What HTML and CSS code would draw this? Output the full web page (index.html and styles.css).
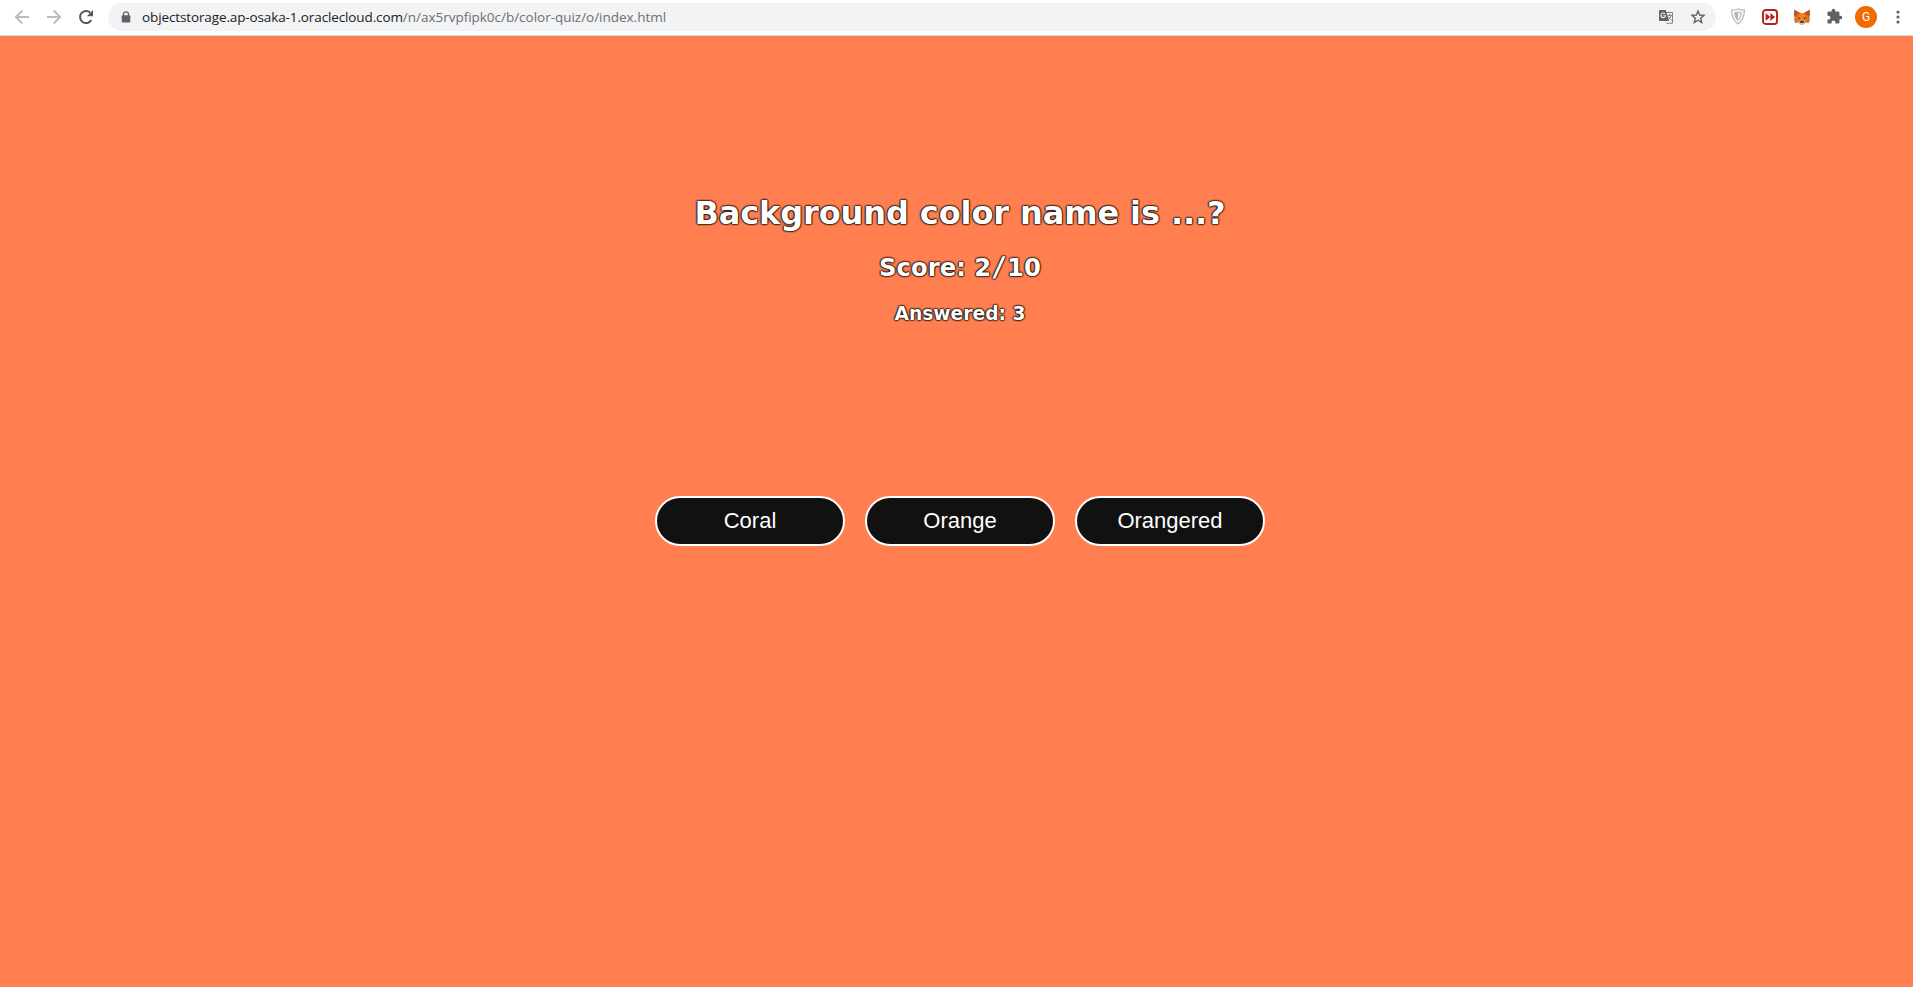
FILE: index.html
```
<!DOCTYPE html>
<html lang="en">
<head>
<meta charset="utf-8">
<title>Color Quiz</title>
<link rel="stylesheet" href="styles.css">
</head>
<body>
<header class="toolbar">
  <span class="slot"><svg width="16" height="16" viewBox="0 0 16 16" fill="none" stroke="#babcbe" stroke-width="1.9"><path d="M15 8H2.200M8.300 1.500L1.800 8l6.500 6.500"/></svg></span>
  <span class="slot"><svg width="16" height="16" viewBox="0 0 16 16" fill="none" stroke="#babcbe" stroke-width="1.900"><path d="M1 8h12.800M7.700 1.500L14.200 8l-6.500 6.500"/></svg></span>
  <span class="slot"><svg width="16" height="16" viewBox="0 0 16 16"><path d="M13.300 11A6 6 0 1 1 12.300 3.800" fill="none" stroke="#55585c" stroke-width="2"/><path d="M15 1v6.200H8.800z" fill="#55585c"/></svg></span>
  <div class="address">
    <svg class="lock" width="10" height="12" viewBox="0 0 10 12"><path d="M2.500 5V3.300a2.500 2.500 0 0 1 5 0V5" fill="none" stroke="#5f6368" stroke-width="1.300"/><rect x="0.700" y="4.300" width="8.600" height="7.200" rx="1" fill="#5f6368"/></svg>
    <span class="url"><span class="host">objectstorage.ap-osaka-1.oraclecloud.com</span><span class="path">/n/ax5rvpfipk0c/b/color-quiz/o/index.html</span></span>
    <span class="slot"><svg width="16" height="16" viewBox="0 0 16 16"><path d="M7 3.500h7.400v10.700H8.500" fill="#fff" stroke="#74777b"/><path d="M1.800 1h6l3.200 11H1.800A.8.800 0 0 1 1 11.200V1.800A.8.800 0 0 1 1.800 1z" fill="#5f6368"/><path d="M7 4.900A2.300 2.300 0 1 0 7.500 6.700H5.200" fill="none" stroke="#f1f3f4" stroke-width="1.100"/><path d="M9.300 6.300h4.500M11.500 5v1.300M13 6.500c-.4 2-1.500 3.500-3 4.600M10 7.500c.8 1.600 2 3 3.500 4" fill="none" stroke="#74777b"/></svg></span>
    <span class="slot"><svg width="16" height="16" viewBox="0 0 16 16" fill="none" stroke="#5f6368" stroke-width="1.400"><path d="M8 2l1.650 4.050 4.350.35-3.300 2.850 1 4.250L8 11.250 4.300 13.500l1-4.250L2 6.400l4.350-.35z"/></svg></span>
  </div>
  <span class="slot first"><svg width="16" height="17" viewBox="0 0 16 17"><path d="M8 1c2 .9 4.300 1.200 6.500 1.100C14.300 8.500 12.400 13 8 16 3.600 13 1.700 8.500 1.500 2.100 3.700 2.200 6 1.900 8 1z" fill="#fafafa" stroke="#bdbdbd" stroke-width="1.300"/><path d="M8 4c1.100.4 2 .6 3.200.6C11 8.200 10 10.800 8 12.600 6 10.800 5 8.200 4.800 4.600 6 4.600 6.900 4.400 8 4z" fill="#f5f5f5" stroke="#adadad" stroke-width="1"/><path d="M5 4.800c1 0 2-.2 3-.6v8C6 10.500 5.200 8 5 4.800z" fill="#b5b5b5"/></svg></span>
  <span class="slot"><svg width="16" height="16" viewBox="0 0 16 16"><rect x="1" y="1" width="14" height="14" rx="2.800" fill="#fff" stroke="#b91f1b" stroke-width="1.900"/><path d="M3.600 4L8.200 8l-4.600 4zM8.400 4L13 8l-4.600 4z" fill="#b91f1b"/></svg></span>
  <span class="slot"><svg width="18" height="16" viewBox="0 0 18 16"><path d="M1.500.8L7 4h4L16.500.8l.6 4.200-.7 3 .6 3-1.300 3.300-3.200-.7-1.800 1.800H7.300l-1.800-1.800-3.200.7L1 11l.6-3L.9 5z" fill="#e27625"/><path d="M1.500.8L7 4 5.500 5 1.600 8 .9 5zM16.500.8L11 4l1.500 1 3.900 3 .7-3z" fill="#b9581d"/><path d="M7 4h4l1.500 5-1 4h-5l-1-4z" fill="#f5841f"/><path d="M4.500 8.500l2.700.2-.7 1.500zM13.500 8.500l-2.700.2.700 1.500z" fill="#233447"/><path d="M5.500 13l1.300-1 .5 1.500h3.400l.5-1.500 1.300 1-1.800 2.100H7.300z" fill="#d7c1b3"/><path d="M7.300 12h3.400l.3 1.700H7z" fill="#2f343b"/></svg></span>
  <span class="slot"><svg width="17" height="17" viewBox="0 0 24 24"><path d="M20.500 11H19V7c0-1.100-.9-2-2-2h-4V3.500a2.500 2.500 0 0 0-5 0V5H4c-1.100 0-1.990.9-1.990 2v3.800H3.500a2.700 2.700 0 0 1 0 5.400H2V20c0 1.100.9 2 2 2h3.800v-1.500a2.700 2.700 0 0 1 5.400 0V22H17c1.100 0 2-.9 2-2v-4h1.500a2.500 2.500 0 0 0 0-5z" fill="#5f6368"/></svg></span>
  <span class="slot"><span class="avatar">G</span></span>
  <span class="slot"><svg width="4" height="14" viewBox="0 0 4 14" fill="#5f6368"><circle cx="2" cy="2" r="1.600"/><circle cx="2" cy="7" r="1.600"/><circle cx="2" cy="12" r="1.600"/></svg></span>
</header>
<main class="quiz">
  <h1 class="question">Background color name is ...?</h1>
  <h2 class="score">Score: 2<span class="slash">/</span>10</h2>
  <h3 class="answered">Answered: 3</h3>
  <div class="choices">
    <button class="choice">Coral</button>
    <button class="choice">Orange</button>
    <button class="choice">Orangered</button>
  </div>
</main>
</body>
</html>
```
FILE: styles.css
```
* { box-sizing: border-box; }
html { height: 100%; overflow: hidden; }
body { margin: 0; height: 100%; overflow: hidden; background: #ff7f50; }
.toolbar {
  display: flex;
  align-items: center;
  height: 36px;
  padding: 0 0 2px 6px;
  background: #fff;
  border-bottom: 1px solid #d5d7db;
}
.slot { flex: 0 0 32px; height: 32px; display: flex; align-items: center; justify-content: center; }
.slot.first { margin-left: 6px; }
.address {
  flex: 0 0 1608px;
  display: flex;
  align-items: center;
  height: 28px;
  margin-left: 6px;
  padding: 0 2px 0 13px;
  border-radius: 14px;
  background: #f1f3f4;
}
.lock { margin-right: 11px; }
.url { flex: 1; white-space: nowrap; font: 13.5px/20px "Open Sans", "Noto Sans", sans-serif; }
.host { color: #202124; letter-spacing: -0.12px; }
.path { color: #6b6f74; letter-spacing: -0.02px; }
.avatar {
  width: 22px;
  height: 22px;
  border-radius: 50%;
  background: #ef6c00;
  color: #fff;
  font: 12px/22px Roboto, sans-serif;
  text-align: center;
}
.quiz {
  width: 1920px;
  padding-top: 158px;
  text-align: center;
  color: #fff;
  font-family: Verdana, "DejaVu Sans", sans-serif;
  text-shadow: 0 0 2px #000, 0 0 2px #000, 0 0 2px #000, 0 0 1px #000;
}
.question { margin: 0; font-size: 32px; line-height: 39px; letter-spacing: -0.1px; }
.score { height: 29px; margin: 20px 0 0; font-size: 24.3px; line-height: 29px; }
.slash { display: inline-block; padding: 0 2px; font-size: 27px; line-height: 1; transform: skewX(-8deg); margin: 0 1px; }
.answered { margin: 20px 0 0; font-size: 18.72px; line-height: 23px; }
.choices { display: flex; justify-content: center; gap: 20px; margin-top: 171px; }
.choice {
  width: 190px;
  height: 50px;
  padding: 0;
  border: 2px solid #fff;
  border-radius: 25px;
  background: #111;
  color: #fff;
  font: 22px "Liberation Sans", Arial, sans-serif;
}
```
